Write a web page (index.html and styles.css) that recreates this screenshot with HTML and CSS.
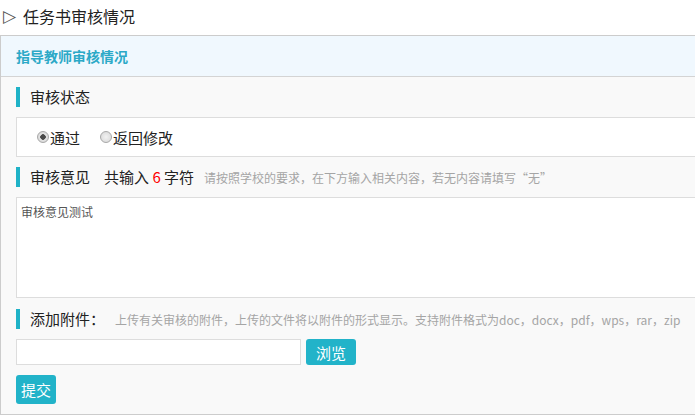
FILE: index.html
```html
<!DOCTYPE html>
<html lang="zh-CN">
<head>
    <meta charset="UTF-8">
    <meta name="viewport" content="width=device-width, initial-scale=1.0">
    <title>任务书审核情况</title>
    <link rel="stylesheet" href="styles.css">
</head>
<body>

    <div class="titulo"><span class="flecha">▷</span>任务书审核情况</div>

    <div class="panel">
        <div class="panel-cabecera">指导教师审核情况</div>

        <div class="panel-cuerpo">
            <div class="etiqueta">审核状态</div>
            <div class="caja-radios">
                <label class="opcion"><input type="radio" name="estado" checked>通过</label>
                <label class="opcion"><input type="radio" name="estado">返回修改</label>
            </div>

            <div class="etiqueta">审核意见<span class="contador">共输入 <em>6</em>&nbsp;字符</span><span class="pista">请按照学校的要求，在下方输入相关内容，若无内容请填写“无”</span></div>
            <textarea class="opinion">审核意见测试</textarea>

            <div class="etiqueta">添加附件：<span class="pista pista-adjunto">上传有关审核的附件，上传的文件将以附件的形式显示。支持附件格式为doc，docx，pdf，wps，rar，zip</span></div>
            <div class="fila-archivo">
                <input type="text" class="campo-archivo">
                <button type="button" class="boton">浏览</button>
            </div>

            <button type="button" class="boton boton-enviar">提交</button>
        </div>
    </div>

</body>
</html>
```

FILE: styles.css
```css
*{
    box-sizing: border-box;
    margin: 0;
    padding: 0;
}
html, body{
    overflow: hidden;
}
body{
    background-color: #fff;
    font-family: "Microsoft YaHei", "Noto Sans CJK SC", sans-serif;
    color: #222;
    width: 695px;
}
.titulo{
    height: 35px;
    line-height: 33px;
    font-size: 16px;
    padding-left: 3px;
    color: #222;
}
.flecha{
    font-family: "DejaVu Sans", sans-serif;
    font-size: 17px;
    color: #555;
    margin-right: 7px;
    position: relative;
    top: -1px;
}
.panel{
    width: 720px;
    border: 1px solid #ccc;
    background-color: #f9f9f9;
}
.panel-cabecera{
    height: 41px;
    line-height: 40px;
    background-color: #f0f8fe;
    border-bottom: 1px solid #d4d4d4;
    padding-left: 15px;
    font-size: 14px;
    font-weight: bold;
    color: #2ca9c7;
}
.panel-cuerpo{
    padding: 10px 15px 10px 15px;
}
.etiqueta{
    height: 20px;
    line-height: 20px;
    border-left: 4px solid #1fb2c7;
    padding-left: 10px;
    font-size: 15px;
    color: #222;
    margin-bottom: 10px;
    white-space: nowrap;
}
.contador{
    margin-left: 14px;
}
.contador em{
    font-style: normal;
    color: #f00;
}
.pista{
    font-size: 12px;
    color: #a5a5a5;
    margin-left: 10px;
}
.pista-adjunto{
    margin-left: 10px;
}
.caja-radios{
    height: 40px;
    background-color: #fff;
    border: 1px solid #ddd;
    display: flex;
    align-items: center;
    padding-left: 20px;
    margin-bottom: 10px;
    font-size: 15px;
}
.opcion{
    display: flex;
    align-items: center;
    margin-right: 20px;
}
.opcion input{
    appearance: none;
    -webkit-appearance: none;
    width: 12px;
    height: 12px;
    border-radius: 50%;
    border: 1px solid #a8a8a8;
    background: radial-gradient(circle, #f2f2f2 0%, #d6d6d6 100%);
    margin-right: 1px;
}
.opcion input:checked{
    background: radial-gradient(circle, #4a4a4a 0, #4a4a4a 2.5px, #e4e4e4 3px, #d0d0d0 100%);
}
.opinion{
    display: block;
    width: 100%;
    height: 101px;
    border: 1px solid #ddd;
    background-color: #fff;
    resize: none;
    font-family: "Microsoft YaHei", "Noto Sans CJK SC", sans-serif;
    font-size: 12px;
    color: #555;
    padding: 5px 4px;
    margin-bottom: 11px;
}
.fila-archivo{
    display: flex;
    align-items: center;
    margin-bottom: 10px;
}
.campo-archivo{
    width: 285px;
    height: 26px;
    border: 1px solid #ddd;
    background-color: #fff;
    margin-right: 5px;
}
.boton{
    height: 26px;
    padding: 0 5px;
    background-color: #22b3c9;
    color: #fff;
    border: none;
    border-radius: 3px;
    font-family: "Microsoft YaHei", "Noto Sans CJK SC", sans-serif;
    font-size: 15px;
    width: 50px;
}
.boton-enviar{
    height: 29px;
    width: 40px;
    padding: 0;
    display: block;
}
```
